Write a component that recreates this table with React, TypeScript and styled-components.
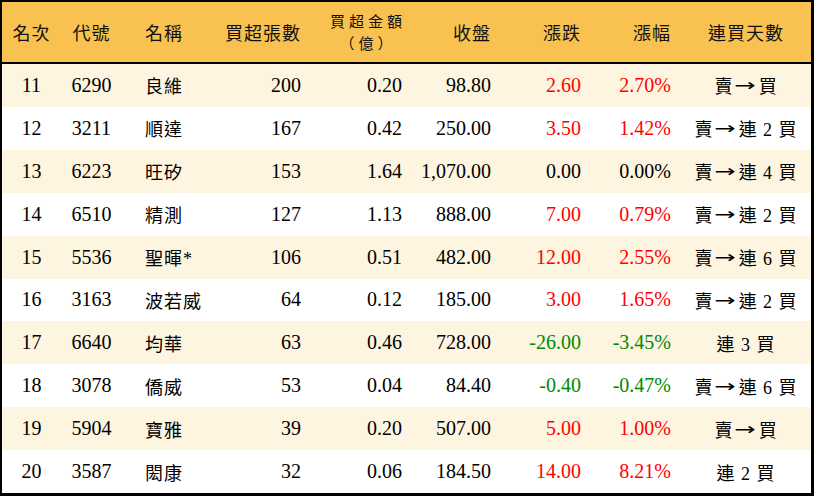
import React from 'react';
import styled, {createGlobalStyle} from 'styled-components';

const GlobalStyle = createGlobalStyle`
    html, body {
        margin: 0;
        padding: 0;
        background: #ffffff;
    }
    body {
        font-family: "Liberation Serif", "Noto Sans CJK TC", serif;
    }
`

type Align = 'left' | 'center' | 'right'
type Tone = 'up' | 'down' | 'flat'

type Stock = {
    rank: number
    code: string
    name: string
    lots: number
    amount: string
    close: string
    change: string
    pct: string
    streak: string
}

const stocks: Stock[] = [
    {rank: 11, code: '6290', name: '良維', lots: 200, amount: '0.20', close: '98.80', change: '2.60', pct: '2.70%', streak: '賣 → 買'},
    {rank: 12, code: '3211', name: '順達', lots: 167, amount: '0.42', close: '250.00', change: '3.50', pct: '1.42%', streak: '賣 → 連 2 買'},
    {rank: 13, code: '6223', name: '旺矽', lots: 153, amount: '1.64', close: '1,070.00', change: '0.00', pct: '0.00%', streak: '賣 → 連 4 買'},
    {rank: 14, code: '6510', name: '精測', lots: 127, amount: '1.13', close: '888.00', change: '7.00', pct: '0.79%', streak: '賣 → 連 2 買'},
    {rank: 15, code: '5536', name: '聖暉*', lots: 106, amount: '0.51', close: '482.00', change: '12.00', pct: '2.55%', streak: '賣 → 連 6 買'},
    {rank: 16, code: '3163', name: '波若威', lots: 64, amount: '0.12', close: '185.00', change: '3.00', pct: '1.65%', streak: '賣 → 連 2 買'},
    {rank: 17, code: '6640', name: '均華', lots: 63, amount: '0.46', close: '728.00', change: '-26.00', pct: '-3.45%', streak: '連 3 買'},
    {rank: 18, code: '3078', name: '僑威', lots: 53, amount: '0.04', close: '84.40', change: '-0.40', pct: '-0.47%', streak: '賣 → 連 6 買'},
    {rank: 19, code: '5904', name: '寶雅', lots: 39, amount: '0.20', close: '507.00', change: '5.00', pct: '1.00%', streak: '賣 → 買'},
    {rank: 20, code: '3587', name: '閎康', lots: 32, amount: '0.06', close: '184.50', change: '14.00', pct: '8.21%', streak: '連 2 買'},
]

const toneOf = (value: string): Tone => {
    if (value.startsWith('-')) return 'down'
    if (parseFloat(value) === 0) return 'flat'
    return 'up'
}

// "賣 → 連 2 買" : the arrow gets its own wider glyph
const renderStreak = (streak: string) => {
    const parts = streak.split('→')
    if (parts.length === 1) return streak
    return (
        <>
            {parts[0]}<Arrow>→</Arrow>{parts[1]}
        </>
    )
}

const columns = '59px 61px 98px 91px 101px 89px 90px 90px 130px'

export default function App() {
    return (
        <>
            <GlobalStyle/>
            <Board>
                <HeaderRow>
                    <HeadCell $align={'center'}>名次</HeadCell>
                    <HeadCell $align={'center'}>代號</HeadCell>
                    <HeadCell $align={'left'}>名稱</HeadCell>
                    <HeadCell $align={'right'}>買超張數</HeadCell>
                    <HeadCell $align={'right'}>
                        <TwoLine>
                            <HeadLine>買超金額</HeadLine>
                            <HeadLine>（億）</HeadLine>
                        </TwoLine>
                    </HeadCell>
                    <HeadCell $align={'right'}>收盤</HeadCell>
                    <HeadCell $align={'right'}>漲跌</HeadCell>
                    <HeadCell $align={'right'}>漲幅</HeadCell>
                    <HeadCell $align={'center'}>連買天數</HeadCell>
                </HeaderRow>
                {stocks.map((s, i) => (
                    <Row key={s.code} $striped={i % 2 === 0}>
                        <Cell $align={'center'}>{s.rank}</Cell>
                        <Cell $align={'center'}>{s.code}</Cell>
                        <NameCell $align={'left'}>{s.name}</NameCell>
                        <Cell $align={'right'}>{s.lots}</Cell>
                        <Cell $align={'right'}>{s.amount}</Cell>
                        <Cell $align={'right'}>{s.close}</Cell>
                        <Cell $align={'right'}><Change $tone={toneOf(s.change)}>{s.change}</Change></Cell>
                        <Cell $align={'right'}><Change $tone={toneOf(s.pct)}>{s.pct}</Change></Cell>
                        <NameCell $align={'center'}>{renderStreak(s.streak)}</NameCell>
                    </Row>
                ))}
            </Board>
        </>
    )
}

const Board = styled.div`
    box-sizing: border-box;
    width: 814px;
    height: 496px;
    border-top: 2px solid #000;
    border-left: 2px solid #000;
    border-right: 3px solid #000;
    border-bottom: 3px solid #000;
    display: flex;
    flex-direction: column;
    background: #ffffff;
`

const HeaderRow = styled.div`
    display: grid;
    grid-template-columns: ${columns};
    height: 60px;
    flex: 0 0 60px;
    background: #f9c150;
    border-bottom: 2px solid #000;
    font-family: "Noto Sans CJK TC", "Liberation Serif", sans-serif;
    font-size: 18px;
    color: #111;
`

const padFor = (align: Align) =>
    align === 'left' ? '0 0 0 23px' : align === 'right' ? '0 10px 0 0' : '0'

const justifyFor = (align: Align) =>
    align === 'left' ? 'flex-start' : align === 'right' ? 'flex-end' : 'center'

const HeadCell = styled.div<{ $align: Align }>`
    display: flex;
    align-items: center;
    justify-content: ${p => justifyFor(p.$align)};
    padding: ${p => padFor(p.$align)};
    letter-spacing: 1px;
    white-space: nowrap;
`

const TwoLine = styled.div`
    display: flex;
    flex-direction: column;
    align-items: center;
    margin: -1px -4px 0 0;
`

const HeadLine = styled.span`
    display: block;
    line-height: 22px;
    font-size: 15px;
    letter-spacing: 4px;
`

const Row = styled.div<{ $striped: boolean }>`
    display: grid;
    grid-template-columns: ${columns};
    flex: 1 1 0;
    background: ${p => p.$striped ? '#fef5e1' : '#ffffff'};
    font-size: 20px;
    color: #000;
`

const Cell = styled.div<{ $align: Align }>`
    display: flex;
    align-items: center;
    justify-content: ${p => justifyFor(p.$align)};
    padding: ${p => padFor(p.$align)};
    white-space: nowrap;
    font-family: "Liberation Serif", "Noto Sans CJK TC", serif;
`

const NameCell = styled(Cell)`
    font-size: 18px;
    letter-spacing: 1px;
`

const Arrow = styled.span`
    font-family: "DejaVu Sans", sans-serif;
    font-size: 17px;
    display: inline-block;
    transform: scaleX(1.5);
    margin: 0 5px;
`

const Change = styled.span<{ $tone: Tone }>`
    color: ${p => p.$tone === 'up' ? '#ff0000' : p.$tone === 'down' ? '#008a00' : '#000'};
`
